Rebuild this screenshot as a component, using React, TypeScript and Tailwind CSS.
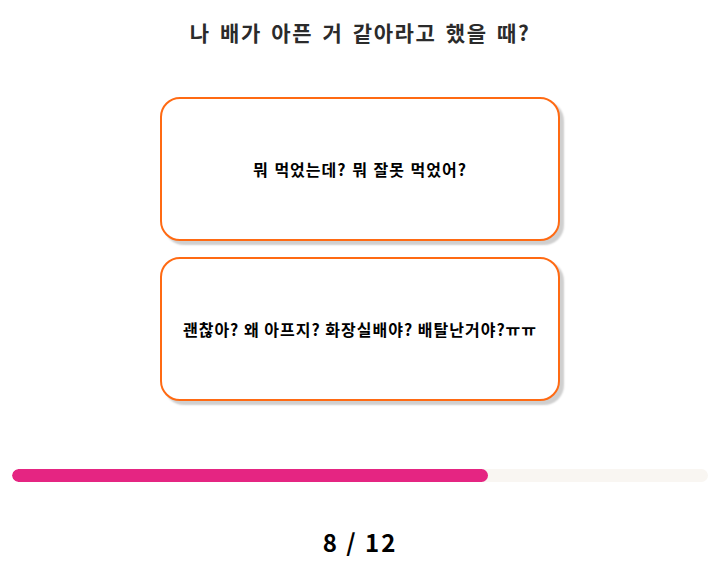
import React from "react";

export default function App() {
  const font = { fontFamily: '"Noto Sans CJK KR", "Noto Sans", sans-serif' };
  return (
    <div className="w-[720px] h-[572px] bg-white flex flex-col items-center" style={font}>
      <h1 className="mt-[18px] text-[21px] font-bold text-[#2b2b2b] leading-[28px] tracking-[1.6px] [word-spacing:3px]">나 배가 아픈 거 같아라고 했을 때?</h1>
      <div className="mt-[51px] flex flex-col gap-[16px]">
        <button className="w-[400px] h-[144px] rounded-[20px] border-2 border-[#ff6a13] bg-white shadow-[4px_4px_2px_#cfcfcf] flex items-center justify-center text-[16px] font-bold text-black tracking-[1px] [word-spacing:1px]">
          뭐 먹었는데? 뭐 잘못 먹었어?
        </button>
        <button className="w-[400px] h-[144px] rounded-[20px] border-2 border-[#ff6a13] bg-white shadow-[4px_4px_2px_#cfcfcf] flex items-center justify-center text-[16px] font-bold text-black tracking-[1px]">
          괜찮아? 왜 아프지? 화장실배야? 배탈난거야?ㅠㅠ
        </button>
      </div>
      <div className="mt-[68px] w-[696px] h-[13px] rounded-full bg-[#f9f6f2] overflow-hidden">
        <div className="h-full rounded-full bg-[#e52582]" style={{ width: "476px" }} />
      </div>
      <div className="mt-[42px] text-[24px] font-bold text-black leading-[36px] tracking-[2px]">8 / 12</div>
    </div>
  );
}
